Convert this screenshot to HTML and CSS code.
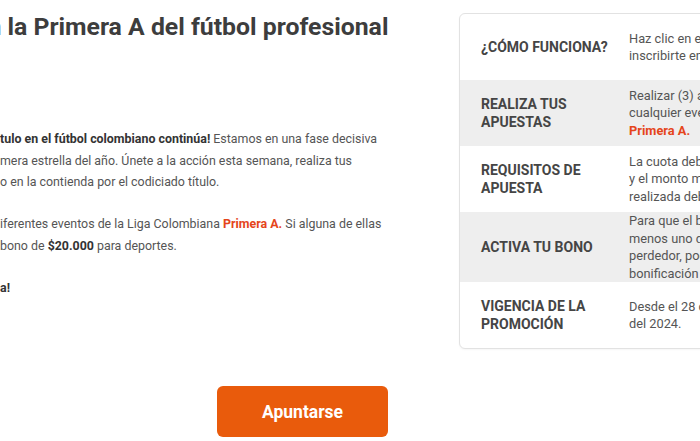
FILE: index.html
```html
<!DOCTYPE html>
<html lang="es">
<head>
<meta charset="utf-8">
<title>Primera A</title>
<link rel="stylesheet" href="styles.css">
</head>
<body>
<main class="page">
  <div class="top">
    <section class="intro">
      <h1 class="title">en la Primera A del fútbol profesional</h1>
      <p class="para"><strong>tulo en el fútbol colombiano continúa!</strong> Estamos en una fase decisiva<br>mera estrella del año. Únete a la acción esta semana, realiza tus<br>o en la contienda por el codiciado título.</p>
      <p class="para">iferentes eventos de la Liga Colombiana <strong class="hl">Primera A.</strong> Si alguna de ellas<br>bono de <strong>$20.000</strong> para deportes.</p>
      <p class="para"><strong>a!</strong></p>
    </section>
    <section class="card">
      <div class="row">
        <div class="label">¿CÓMO FUNCIONA?</div>
        <div class="text">Haz clic en el botón “Apuntarse” para<br>inscribirte en la promoción.</div>
      </div>
      <div class="row alt">
        <div class="label">REALIZA TUS<br>APUESTAS</div>
        <div class="text">Realizar (3) apuestas combinadas en<br>cualquier evento de la Liga Colombiana<br><strong class="hl">Primera A.</strong></div>
      </div>
      <div class="row">
        <div class="label">REQUISITOS DE<br>APUESTA</div>
        <div class="text">La cuota debe ser mínima de 1.50<br>y el monto mínimo de cada apuesta<br>realizada debe ser de $5.000.</div>
      </div>
      <div class="row alt">
        <div class="label">ACTIVA TU BONO</div>
        <div class="text">Para que el bono se active, al<br>menos uno de tus pronósticos debe ser<br>perdedor, podrás reclamar la<br>bonificación de $20.000.</div>
      </div>
      <div class="row">
        <div class="label">VIGENCIA DE LA<br>PROMOCIÓN</div>
        <div class="text">Desde el 28 de octubre hasta el 3 de<br>del 2024.</div>
      </div>
    </section>
  </div>
  <div class="actions">
    <button class="btn" type="button">Apuntarse</button>
  </div>
</main>
</body>
</html>
```
FILE: styles.css
```css
* { box-sizing: border-box; }
html, body { margin: 0; padding: 0; background: #fff; }
body {
  width: 700px;
  height: 441px;
  overflow: hidden;
  font-family: Roboto, "Liberation Sans", sans-serif;
  color: #555;
}
.page { width: 1000px; }
.top {
  display: flex;
  align-items: flex-start;
}
.intro {
  flex: 0 0 459px;
  width: 459px;
}
.title {
  margin: 11.5px 0 0 -26px;
  font-size: 24.8px;
  line-height: 30px;
  font-weight: 700;
  color: #3d3d3d;
  white-space: nowrap;
}
.para {
  margin: 0 0 20.5px 0;
  font-size: 12.4px;
  line-height: 21.6px;
  color: #555;
  white-space: nowrap;
}
.title + .para { margin-top: 86.5px; }
.para strong { color: #333; font-weight: 700; }
.para strong.hl, .hl { color: #e5451b; font-weight: 700; }
.card {
  flex: 0 0 460px;
  margin-top: 13px;
  border: 1px solid #e2e2e2;
  border-radius: 6px;
  overflow: hidden;
  box-shadow: 0 1px 2px rgba(0,0,0,0.04);
  background: #fff;
}
.row {
  display: grid;
  grid-template-columns: 169px 1fr;
  align-items: center;
  min-height: 66px;
}
.row.alt { background: #eeeeee; }
.label {
  padding-left: 21px;
  font-size: 14px;
  line-height: 18px;
  font-weight: 700;
  color: #454545;
}
.text {
  font-size: 12.8px;
  line-height: 17.5px;
  color: #555;
  white-space: nowrap;
}
.actions {
  padding: 37px 0 0 217px;
}
.btn {
  width: 171px;
  height: 51px;
  border: 0;
  border-radius: 6px;
  background: #e95b0c;
  color: #fff;
  font-family: Roboto, "Liberation Sans", sans-serif;
  font-size: 17.5px;
  font-weight: 700;
  cursor: pointer;
}
```
